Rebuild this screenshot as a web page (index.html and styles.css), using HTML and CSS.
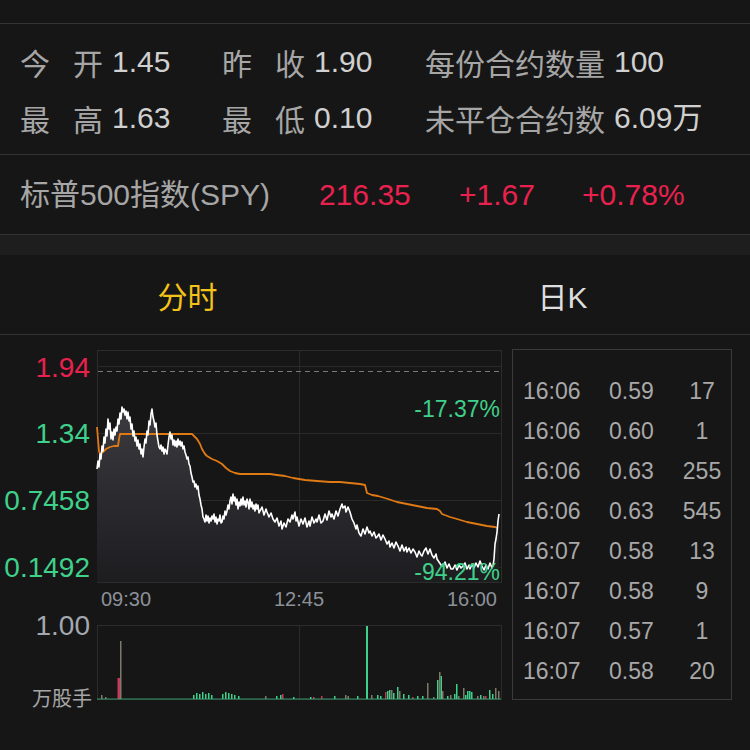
FILE: index.html
```html
<!DOCTYPE html>
<html lang="zh-CN">
<head>
<meta charset="utf-8">
<title>SPY 期权</title>
<link rel="stylesheet" href="styles.css">
</head>
<body>
<div class="page">
  <div class="topbar"></div>

  <section class="stats">
    <div class="stat"><span class="lab"><i>今</i><i>开</i></span><span class="val">1.45</span></div>
    <div class="stat"><span class="lab"><i>昨</i><i>收</i></span><span class="val">1.90</span></div>
    <div class="stat"><span class="lab">每份合约数量</span><span class="val">100</span></div>
    <div class="stat"><span class="lab"><i>最</i><i>高</i></span><span class="val">1.63</span></div>
    <div class="stat"><span class="lab"><i>最</i><i>低</i></span><span class="val">0.10</span></div>
    <div class="stat"><span class="lab">未平仓合约数</span><span class="val">6.09万</span></div>
  </section>

  <section class="spy">
    <span class="spy-name">标普500指数(SPY)</span>
    <span class="up">216.35</span>
    <span class="up">+1.67</span>
    <span class="up">+0.78%</span>
  </section>

  <div class="band"></div>

  <nav class="tabs">
    <div class="tab active">分时</div>
    <div class="tab">日K</div>
  </nav>

  <section class="chart-wrap">
    <svg class="chart" width="505" height="380" viewBox="0 336 505 380" xmlns="http://www.w3.org/2000/svg">
      <defs>
        <linearGradient id="area" x1="0" y1="405" x2="0" y2="583" gradientUnits="userSpaceOnUse">
          <stop offset="0" stop-color="#3b3b40"/>
          <stop offset="1" stop-color="#1d1d20"/>
        </linearGradient>
      </defs>
      <!-- price grid -->
      <rect x="97.5" y="351.5" width="404" height="232" fill="none" stroke="#2c2c2c"/>
      <g stroke="#2a2a2a" stroke-width="1">
        <line x1="97" y1="367.5" x2="501" y2="367.5"/>
        <line x1="97" y1="434.5" x2="501" y2="434.5"/>
        <line x1="97" y1="501.5" x2="501" y2="501.5"/>
        <line x1="97" y1="568.5" x2="501" y2="568.5"/>
        <line x1="299.5" y1="351" x2="299.5" y2="583"/>
      </g>
      <line x1="98" y1="372.5" x2="501" y2="372.5" stroke="#7a7a7a" stroke-dasharray="5 4"/>

      <polygon fill="url(#area)" points="97,470 98,462 99,468 100,455 101,460 102,447 103,452 104,438 105,444 106,430 107,437 108,420 109,430 110,424 111,440 112,433 113,441 114,430 115,436 116,428 117,432 118,420 119,425 120,414 121,420 122,408 123,413 124,410 125,416 126,412 127,420 128,413 129,422 130,418 131,430 132,425 133,437 134,432 135,442 136,438 137,447 138,441 139,450 140,445 141,455 142,450 143,458 144,448 145,440 146,444 147,432 148,436 149,422 150,426 151,415 152,410 153,418 154,422 155,428 156,424 157,436 158,442 159,448 160,450 161,446 162,452 163,448 164,455 165,450 166,452 167,455 168,446 169,438 170,433 171,440 172,436 173,446 174,441 175,447 176,442 177,448 178,440 179,446 180,442 181,447 182,443 183,450 184,447 185,453 186,456 187,460 188,458 189,465 190,467 191,474 192,478 193,483 194,482 195,488 196,485 197,490 198,487 199,496 200,500 201,506 202,510 203,518 204,520 205,523 206,516 207,522 208,517 209,524 210,519 211,522 212,517 213,520 214,515 215,523 216,518 217,525 218,520 219,522 220,516 221,524 222,523 223,517 224,520 225,512 226,516 227,512 228,506 229,510 230,502 231,498 232,505 233,495 234,502 235,498 236,506 237,500 238,510 239,503 240,507 241,500 242,506 243,498 244,506 245,502 246,508 247,500 248,503 249,510 250,500 251,508 252,503 253,510 254,506 255,512 256,505 257,510 258,506 259,514 260,512 262,508 264,516 266,510 267,513 269,518 271,514 273,520 275,523 277,519 279,527 281,522 282,530 284,524 286,528 288,520 290,523 292,516 293,520 295,513 296,522 297,518 299,527 301,520 303,525 305,519 307,528 309,522 310,527 312,518 314,524 316,520 317,523 319,516 321,524 323,522 325,515 327,521 329,512 331,518 332,515 334,520 336,512 338,517 340,510 342,505 343,509 345,507 346,513 348,508 350,513 352,520 354,524 356,530 357,526 359,534 361,537 363,530 365,535 367,528 369,534 370,532 372,537 374,533 376,539 377,538 379,535 381,541 383,536 385,540 387,545 389,542 390,548 392,544 394,549 396,543 398,547 400,552 402,546 404,552 406,548 407,553 409,549 411,554 413,550 415,553 417,558 419,552 421,556 422,557 424,552 426,549 428,555 430,550 432,556 434,559 436,555 437,560 439,563 441,566 443,567 445,563 447,569 449,565 451,570 453,570 455,566 457,571 459,566 461,569 463,567 465,564 467,570 469,566 470,570 472,565 474,569 476,564 478,568 480,562 482,567 484,571 486,566 488,570 490,564 492,569 493,567 494,560 495,545 496,540 497,533 498,522 499,515 499,583 97,583"/>

      <polyline fill="none" stroke="#e07a14" stroke-width="1.8" stroke-linejoin="round" points="97,428 98,440 99,452 100,455 103,453 106,450 110,448 114,447 118,447 119,440 120,435 150,435 170,435 192,435 194,437 197,440 200,445 202,450 205,455 207,457 212,460 217,462 222,465 226,469 230,472 235,474 240,475 250,475 260,475 270,475 277,476 285,477 293,479 305,481 317,482 330,483 340,483 350,484 360,485 365,486 366,490 367,494 372,496 378,497 388,500 397,503 407,505 417,507 427,509 437,510 440,512 442,515 450,518 457,520 467,523 477,525 487,527 495,528 497,529"/>

      <polyline fill="none" stroke="#ffffff" stroke-width="1.6" stroke-linejoin="round" points="97,470 98,462 99,468 100,455 101,460 102,447 103,452 104,438 105,444 106,430 107,437 108,420 109,430 110,424 111,440 112,433 113,441 114,430 115,436 116,428 117,432 118,420 119,425 120,414 121,420 122,408 123,413 124,410 125,416 126,412 127,420 128,413 129,422 130,418 131,430 132,425 133,437 134,432 135,442 136,438 137,447 138,441 139,450 140,445 141,455 142,450 143,458 144,448 145,440 146,444 147,432 148,436 149,422 150,426 151,415 152,410 153,418 154,422 155,428 156,424 157,436 158,442 159,448 160,450 161,446 162,452 163,448 164,455 165,450 166,452 167,455 168,446 169,438 170,433 171,440 172,436 173,446 174,441 175,447 176,442 177,448 178,440 179,446 180,442 181,447 182,443 183,450 184,447 185,453 186,456 187,460 188,458 189,465 190,467 191,474 192,478 193,483 194,482 195,488 196,485 197,490 198,487 199,496 200,500 201,506 202,510 203,518 204,520 205,523 206,516 207,522 208,517 209,524 210,519 211,522 212,517 213,520 214,515 215,523 216,518 217,525 218,520 219,522 220,516 221,524 222,523 223,517 224,520 225,512 226,516 227,512 228,506 229,510 230,502 231,498 232,505 233,495 234,502 235,498 236,506 237,500 238,510 239,503 240,507 241,500 242,506 243,498 244,506 245,502 246,508 247,500 248,503 249,510 250,500 251,508 252,503 253,510 254,506 255,512 256,505 257,510 258,506 259,514 260,512 262,508 264,516 266,510 267,513 269,518 271,514 273,520 275,523 277,519 279,527 281,522 282,530 284,524 286,528 288,520 290,523 292,516 293,520 295,513 296,522 297,518 299,527 301,520 303,525 305,519 307,528 309,522 310,527 312,518 314,524 316,520 317,523 319,516 321,524 323,522 325,515 327,521 329,512 331,518 332,515 334,520 336,512 338,517 340,510 342,505 343,509 345,507 346,513 348,508 350,513 352,520 354,524 356,530 357,526 359,534 361,537 363,530 365,535 367,528 369,534 370,532 372,537 374,533 376,539 377,538 379,535 381,541 383,536 385,540 387,545 389,542 390,548 392,544 394,549 396,543 398,547 400,552 402,546 404,552 406,548 407,553 409,549 411,554 413,550 415,553 417,558 419,552 421,556 422,557 424,552 426,549 428,555 430,550 432,556 434,559 436,555 437,560 439,563 441,566 443,567 445,563 447,569 449,565 451,570 453,570 455,566 457,571 459,566 461,569 463,567 465,564 467,570 469,566 470,570 472,565 474,569 476,564 478,568 480,562 482,567 484,571 486,566 488,570 490,564 492,569 493,567 494,560 495,545 496,540 497,533 498,522 499,515"/>

      <g class="ylab">
        <text x="90" y="378" class="red">1.94</text>
        <text x="90" y="444" class="grn">1.34</text>
        <text x="90" y="511" class="grn">0.7458</text>
        <text x="90" y="578" class="grn">0.1492</text>
      </g>
      <text x="500" y="418" class="pct">-17.37%</text>
      <text x="500" y="581" class="pct">-94.21%</text>

      <g class="xlab">
        <text x="101" y="607">09:30</text>
        <text x="299" y="607" text-anchor="middle">12:45</text>
        <text x="497" y="607" text-anchor="end">16:00</text>
      </g>

      <!-- volume -->
      <text x="90" y="636" class="vmax">1.00</text>
      <text x="92" y="707" class="vunit">万股手</text>
      <rect x="97.5" y="626.5" width="404" height="74" fill="none" stroke="#2c2c2c"/>
      <line x1="299.5" y1="626" x2="299.5" y2="700" stroke="#2a2a2a"/>
      <g class="vg">
        <rect x="193" y="696" width="1.5" height="4"/><rect x="196" y="694" width="1.5" height="6"/><rect x="199" y="695" width="1.5" height="5"/><rect x="202" y="693" width="1.5" height="7"/><rect x="205" y="695" width="1.5" height="5"/><rect x="208" y="694" width="1.5" height="6"/><rect x="211" y="696" width="1.5" height="4"/>
        <rect x="222" y="695" width="1.5" height="5"/><rect x="225" y="693" width="1.5" height="7"/><rect x="228" y="694" width="1.5" height="6"/><rect x="231" y="695" width="1.5" height="5"/><rect x="234" y="696" width="1.5" height="4"/><rect x="238" y="697" width="1.5" height="3"/>
        <rect x="276" y="697" width="1.5" height="3"/><rect x="280" y="696" width="1.5" height="4"/><rect x="293" y="698" width="1.5" height="2"/><rect x="310" y="698" width="1.5" height="2"/><rect x="334" y="697" width="1.5" height="3"/><rect x="357" y="697" width="1.5" height="3"/>
        <rect x="366" y="627" width="2" height="73"/>
        <rect x="377" y="696" width="1.5" height="4"/><rect x="380" y="697" width="1.5" height="3"/><rect x="387" y="692" width="1.5" height="8"/><rect x="389" y="691" width="1.5" height="9"/><rect x="393" y="694" width="1.5" height="6"/><rect x="397" y="688" width="1.5" height="12"/><rect x="403" y="695" width="1.5" height="5"/><rect x="408" y="696" width="1.5" height="4"/><rect x="417" y="697" width="1.5" height="3"/><rect x="422" y="697" width="1.5" height="3"/>
        <rect x="437" y="681" width="1.5" height="19"/><rect x="440.5" y="677" width="1.5" height="23"/><rect x="447" y="697" width="1.5" height="3"/><rect x="454" y="695" width="1.5" height="5"/><rect x="456" y="685" width="1.5" height="15"/><rect x="465" y="696" width="1.5" height="4"/><rect x="467" y="692" width="1.5" height="8"/><rect x="469" y="692" width="1.5" height="8"/><rect x="471" y="693" width="1.5" height="7"/><rect x="480" y="696" width="1.5" height="4"/><rect x="489" y="691" width="1.5" height="9"/><rect x="492" y="695" width="1.5" height="5"/>
      </g>
      <g class="vx">
        <rect x="101" y="696" width="1.5" height="4"/><rect x="105" y="698" width="1.5" height="2"/><rect x="120" y="642" width="1.5" height="58"/><rect x="265" y="697" width="1.5" height="3"/><rect x="345" y="696" width="1.5" height="4"/><rect x="347.5" y="697" width="1.5" height="3"/><rect x="371" y="696" width="1.5" height="4"/><rect x="391" y="691" width="1.5" height="9"/><rect x="399" y="692" width="1.5" height="8"/><rect x="427" y="684" width="1.5" height="16"/><rect x="433" y="698" width="1.5" height="2"/><rect x="439" y="673" width="1.5" height="27"/><rect x="442" y="692" width="1.5" height="8"/><rect x="450" y="696" width="1.5" height="4"/><rect x="458" y="697" width="1.5" height="3"/><rect x="463" y="689" width="1.5" height="11"/><rect x="477" y="697" width="1.5" height="3"/><rect x="483" y="697" width="1.5" height="3"/><rect x="495" y="689" width="1.5" height="11"/><rect x="498" y="692" width="1.5" height="8"/>
      </g>
      <g class="vr">
        <rect x="117.5" y="679" width="2.5" height="21"/><rect x="282" y="695" width="1.5" height="5"/><rect x="313" y="698" width="1.5" height="2"/><rect x="321" y="697" width="1.5" height="3"/><rect x="385" y="693" width="1.5" height="7"/><rect x="412" y="698" width="1.5" height="2"/><rect x="485" y="697" width="1.5" height="3"/>
      </g>
      <line x1="97" y1="700" x2="501" y2="700" stroke="#3fbf82" stroke-width="1.2" opacity="0.75"/>
    </svg>

    <div class="trades">
      <div class="trow"><span>16:06</span><span>0.59</span><span class="q">17</span></div>
      <div class="trow"><span>16:06</span><span>0.60</span><span class="q">1</span></div>
      <div class="trow"><span>16:06</span><span>0.63</span><span class="q">255</span></div>
      <div class="trow"><span>16:06</span><span>0.63</span><span class="q">545</span></div>
      <div class="trow"><span>16:07</span><span>0.58</span><span class="q">13</span></div>
      <div class="trow"><span>16:07</span><span>0.58</span><span class="q">9</span></div>
      <div class="trow"><span>16:07</span><span>0.57</span><span class="q">1</span></div>
      <div class="trow"><span>16:07</span><span>0.58</span><span class="q">20</span></div>
    </div>
  </section>
</div>
</body>
</html>
```

FILE: styles.css
```css
* { box-sizing: border-box; }

html, body {
  margin: 0;
  padding: 0;
  background: #161616;
}

body {
  width: 750px;
  height: 750px;
  overflow: hidden;
  font-family: "Liberation Sans", "Noto Sans CJK SC", sans-serif;
  color: #a6a6a6;
}

.topbar {
  height: 24px;
  border-bottom: 1px solid #333;
}

.stats {
  display: grid;
  grid-template-columns: 202px 203px 1fr;
  grid-auto-rows: 56px;
  align-items: center;
  padding: 10px 0 8px 20px;
  border-bottom: 1px solid #333;
  font-size: 30px;
  line-height: 1;
}

.stat {
  display: flex;
  align-items: center;
  white-space: nowrap;
}

.lab {
  display: flex;
  gap: 23px;
  color: #a6a6a6;
  font-family: "Noto Sans CJK SC", sans-serif;
}

.lab i {
  font-style: normal;
}

.val {
  margin-left: 9px;
  color: #d0d0d0;
}

.spy {
  display: grid;
  grid-template-columns: 299px 140px 123px 1fr;
  align-items: center;
  height: 80px;
  padding-left: 20px;
  border-bottom: 1px solid #333;
  font-size: 30px;
  line-height: 1;
  white-space: nowrap;
}

.spy-name {
  color: #a6a6a6;
}

.up {
  color: #e8214f;
}

.band {
  height: 20px;
  background: #1e1e1e;
}

.tabs {
  display: flex;
  height: 80px;
  border-bottom: 1px solid #333;
}

.tab {
  flex: 1;
  display: flex;
  align-items: center;
  justify-content: center;
  font-size: 30px;
  color: #dedede;
}

.tab.active {
  color: #f2c318;
}

.chart-wrap {
  display: flex;
  align-items: flex-start;
}

.chart {
  display: block;
  flex: none;
  font-family: "Liberation Sans", "Noto Sans CJK SC", sans-serif;
}

.ylab text {
  font-size: 28px;
  text-anchor: end;
}

.red { fill: #e8214f; }
.grn { fill: #3fd08b; }

.pct {
  font-size: 23px;
  fill: #3fd08b;
  text-anchor: end;
}

.xlab text {
  font-size: 20px;
  fill: #8c9199;
}

.vmax {
  font-size: 28px;
  fill: #a3a8b0;
  text-anchor: end;
}

.vunit {
  font-size: 20px;
  fill: #a6a6a6;
  text-anchor: end;
  font-family: "Noto Sans CJK SC", sans-serif;
}

.vg rect { fill: #3fd08b; }
.vx rect { fill: #7f7a68; }
.vr rect { fill: #c7385a; }

.trades {
  flex: none;
  width: 220px;
  height: 351px;
  margin: 14px 0 0 7px;
  padding: 21px 0 0 10px;
  border: 1px solid #3a3a3a;
  font-size: 23px;
  color: #a8a8a8;
}

.trow {
  display: grid;
  grid-template-columns: 86px 70px 46px;
  height: 40px;
  align-items: center;
  line-height: 1;
}

.q {
  text-align: center;
}
```
